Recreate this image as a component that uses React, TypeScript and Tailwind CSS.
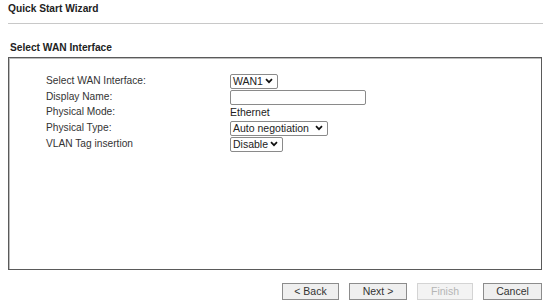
import React from "react";

const Chevron = () => (
  <svg width="8" height="6" viewBox="0 0 8 6" className="ml-auto shrink-0">
    <path d="M1 1.2 L4 4.2 L7 1.2" fill="none" stroke="#111" strokeWidth="1.7" />
  </svg>
);

const Select = ({ label, w }: { label: string; w: string }) => (
  <div
    className={`flex items-center h-[15px] ${w} border border-[#8a8a8a] rounded-[2px] bg-white pl-[2px] pr-[4px] text-[10.5px] leading-none text-[#222] whitespace-nowrap`}
  >
    <span>{label}</span>
    <Chevron />
  </div>
);

const Btn = ({ label, disabled, w }: { label: string; disabled?: boolean; w: string }) => (
  <div
    className={`flex items-center justify-center h-[17px] ${w} border ${
      disabled ? "border-[#d4d4d4] text-[#b5b5b5] bg-[#f3f3f3]" : "border-[#8c8c8c] text-[#333] bg-[#efefef]"
    } text-[10.5px] leading-none whitespace-nowrap`}
  >
    {label}
  </div>
);

export default function App() {
  return (
    <div
      className="w-[550px] h-[306px] bg-white relative"
      style={{ fontFamily: '"Liberation Sans", Arial, sans-serif' }}
    >
      <div className="pt-[3px] pl-[8px] text-[10.2px] font-bold text-[#222] leading-[12px]">Quick Start Wizard</div>
      <div className="mt-[8px] ml-[8px] w-[535px] h-[1px] bg-[#c8c8c8]" />
      <div className="mt-[18px] pl-[10px] text-[10.2px] font-bold text-[#222] leading-[12px]">Select WAN Interface</div>
      <div className="mt-[3px] ml-[8px] w-[534px] h-[213px] border border-[#5a5a5a] shadow-[inset_1px_1px_0_#bdbdbd] pt-[15px] pl-[37px]">
        <div className="grid grid-cols-[184px_1fr] text-[10.2px] text-[#333] leading-none whitespace-nowrap">
          <div className="h-[16px] flex items-center">Select WAN Interface:</div>
          <div className="h-[16px] flex items-center"><Select label="WAN1" w="w-[48px]" /></div>
          <div className="h-[16px] flex items-center">Display Name:</div>
          <div className="h-[16px] flex items-center">
            <div className="w-[136px] h-[15px] border border-[#8a8a8a] rounded-[2px] bg-white" />
          </div>
          <div className="h-[15px] flex items-center">Physical Mode:</div>
          <div className="h-[15px] flex items-center text-[10.5px] text-[#222]">Ethernet</div>
          <div className="h-[16px] flex items-center">Physical Type:</div>
          <div className="h-[16px] flex items-center"><Select label="Auto negotiation" w="w-[98px]" /></div>
          <div className="h-[16px] flex items-center">VLAN Tag insertion</div>
          <div className="h-[16px] flex items-center"><Select label="Disable" w="w-[53px]" /></div>
        </div>
      </div>
      <div className="mt-[13px] flex justify-end pr-[8px] gap-[10px]">
        <Btn label="< Back" w="w-[57px]" />
        <Btn label="Next >" w="w-[58px]" />
        <Btn label="Finish" w="w-[56px]" disabled />
        <Btn label="Cancel" w="w-[59px]" />
      </div>
    </div>
  );
}
